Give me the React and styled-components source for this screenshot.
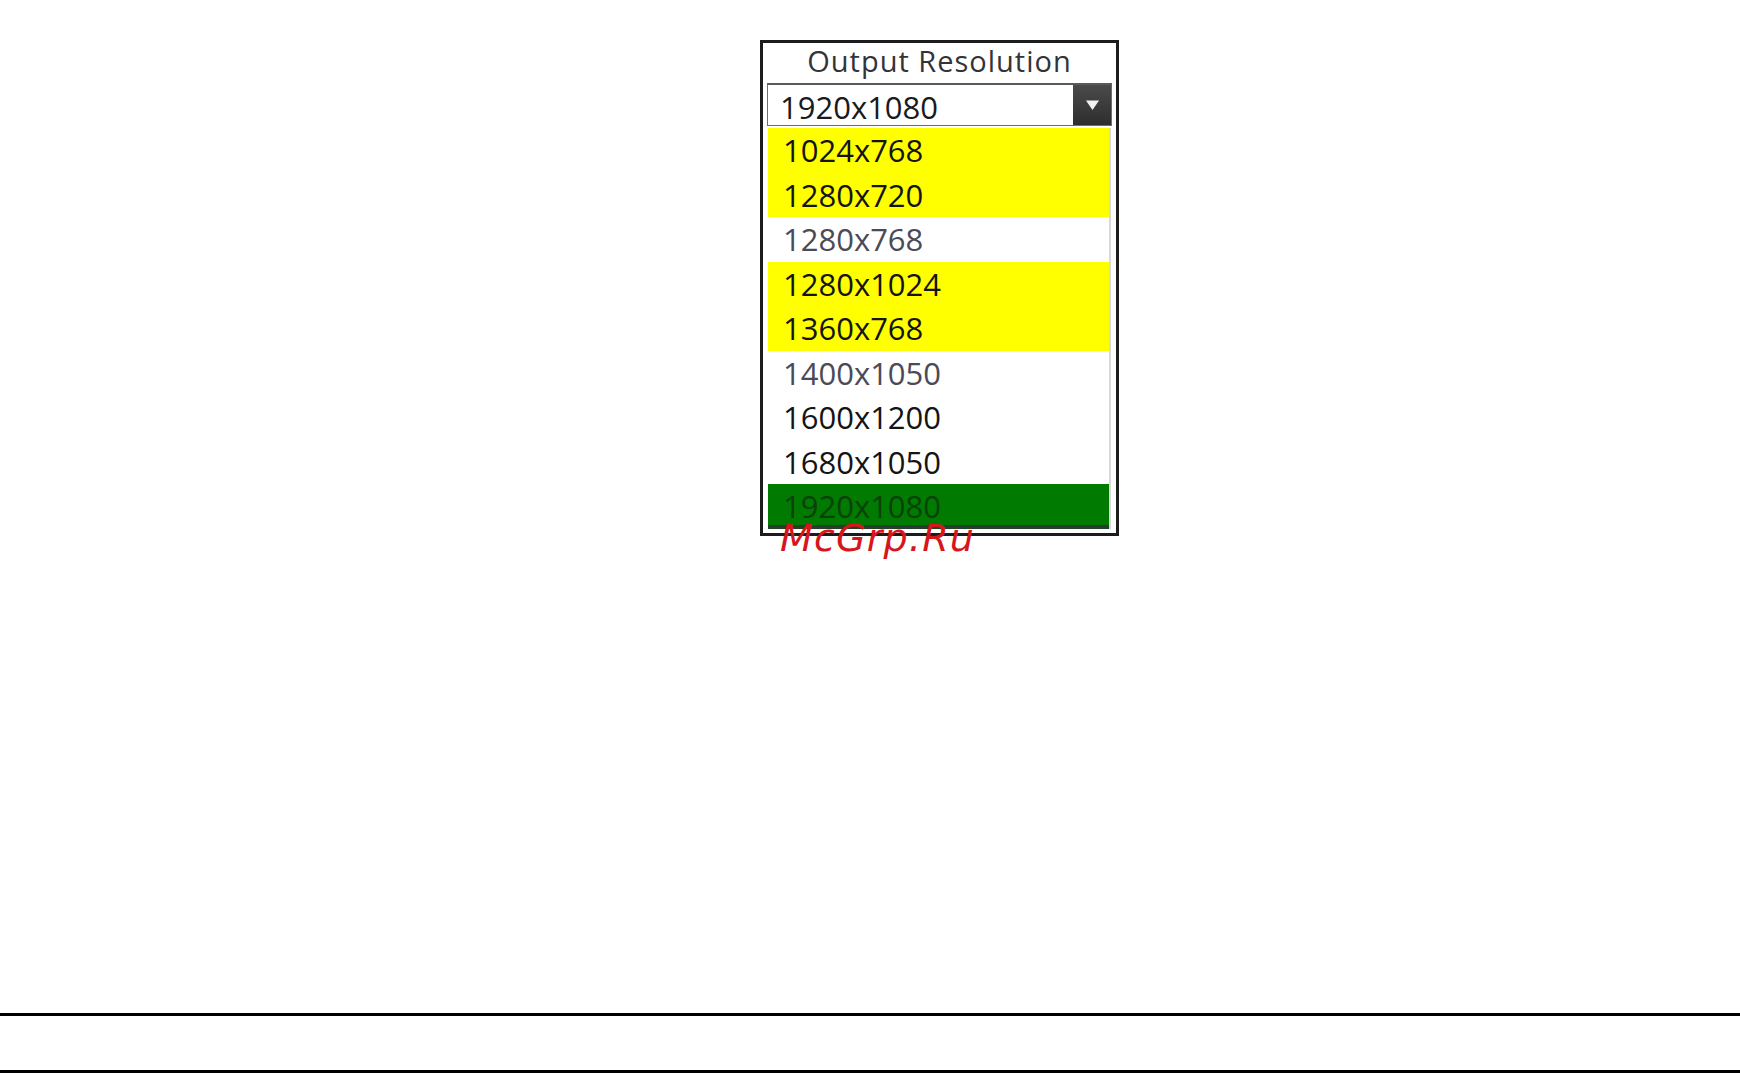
import styled, { createGlobalStyle } from "styled-components";

const GlobalStyle = createGlobalStyle`
  html, body {
    margin: 0;
    padding: 0;
    background: #ffffff;
  }
  body {
    font-family: "Open Sans", "Liberation Sans", sans-serif;
  }
`;

const RESOLUTIONS = [
  { label: "1024x768", tone: "supported" },
  { label: "1280x720", tone: "supported" },
  { label: "1280x768", tone: "plain", faded: true },
  { label: "1280x1024", tone: "supported" },
  { label: "1360x768", tone: "supported" },
  { label: "1400x1050", tone: "plain", faded: true },
  { label: "1600x1200", tone: "plain" },
  { label: "1680x1050", tone: "plain" },
  { label: "1920x1080", tone: "selected" },
];

const ROW_BG = {
  supported: "#ffff00",
  plain: "#ffffff",
  selected: "#007a00",
};

const Page = styled.div`
  min-height: 1073px;
  display: flex;
  flex-direction: column;
`;

const Stage = styled.div`
  padding: 40px 0 0 760px;
`;

const Panel = styled.div`
  position: relative;
  width: 359px;
  box-sizing: border-box;
  border: 3px solid #1c1c1c;
  background: #ffffff;
  padding: 0 4px 4px;
`;

const Title = styled.div`
  height: 40px;
  line-height: 36px;
  text-align: center;
  font-size: 29px;
  letter-spacing: 1px;
  color: #333338;
`;

const Combo = styled.div`
  display: flex;
  height: 43px;
  box-sizing: border-box;
  border: 1px solid #6e6e6e;
  border-top: 2px solid #5a5a5a;
  background: #ffffff;
`;

const ComboValue = styled.div`
  flex: 1;
  padding: 2px 0 0 12px;
  line-height: 40px;
  font-size: 31px;
  color: #1a1a1a;
`;

const ComboButton = styled.div`
  width: 38px;
  display: flex;
  align-items: center;
  justify-content: center;
  background: linear-gradient(#4a4a4a, #2e2e2e);
`;

const List = styled.div`
  margin: 2px 1px 0;
  border-right: 2px solid #d8d8dc;
`;

const Row = styled.div`
  height: 44.5px;
  line-height: 44.5px;
  padding-left: 15px;
  font-size: 31px;
  background: ${(p) => ROW_BG[p.$tone]};
  color: ${(p) =>
    p.$tone === "selected" ? "#0a420a" : p.$faded ? "#4a4a58" : "#141414"};
  box-shadow: ${(p) =>
    p.$tone === "selected" ? "inset 0 -4px 0 #24402a" : "none"};
`;

const Watermark = styled.div`
  position: absolute;
  left: 17px;
  top: 476px;
  font-family: "DejaVu Sans", "Liberation Sans", sans-serif;
  font-style: italic;
  font-size: 38px;
  line-height: 38px;
  letter-spacing: 1.2px;
  color: #d6161c;
  white-space: nowrap;
`;

const Footer = styled.div`
  margin-top: auto;
  height: 60px;
  box-sizing: border-box;
  border-top: 3px solid #000000;
  border-bottom: 3px solid #000000;
`;

const Arrow = () => (
  <svg width="15" height="12" viewBox="0 0 15 12">
    <path d="M1 1.5 L14 1.5 L7.5 11 Z" fill="#f2f2f2" />
  </svg>
);

export default function App() {
  return (
    <>
      <GlobalStyle />
      <Page>
        <Stage>
          <Panel>
            <Title>Output Resolution</Title>
            <Combo>
              <ComboValue>1920x1080</ComboValue>
              <ComboButton>
                <Arrow />
              </ComboButton>
            </Combo>
            <List>
              {RESOLUTIONS.map((r) => (
                <Row key={r.label} $tone={r.tone} $faded={r.faded}>
                  {r.label}
                </Row>
              ))}
            </List>
            <Watermark>McGrp.Ru</Watermark>
          </Panel>
        </Stage>
        <Footer />
      </Page>
    </>
  );
}
